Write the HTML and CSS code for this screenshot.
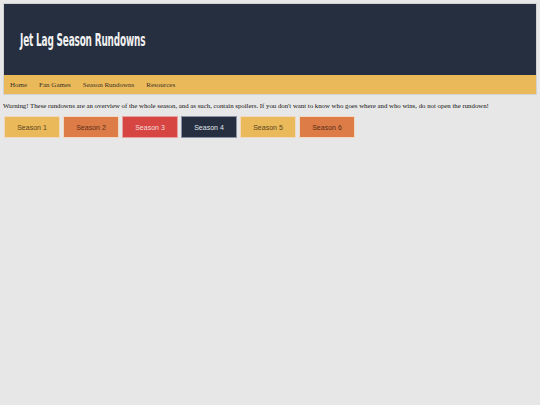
FILE: index.html
```html
<!DOCTYPE html>
<html lang="en">
<head>
  <meta charset="UTF-8">
  <meta name="viewport" content="width=device-width, initial-scale=1.0">
  <title>Jet Lag Season Rundowns</title>
  <link rel="stylesheet" href="styles.css">
</head>
<body>
  <header class="site-header">
    <div class="banner">
      <h1>Jet Lag Season Rundowns</h1>
    </div>
    <nav class="menu">
      <a href="#">Home</a>
      <a href="#">Fan Games</a>
      <a href="#">Season Rundowns</a>
      <a href="#">Resources</a>
    </nav>
  </header>

  <main>
    <p class="warning">Warning! These rundowns are an overview of the whole season, and as such, contain spoilers. If you don't want to know who goes where and who wins, do not open the rundown!</p>
    <div class="seasons">
      <button class="season yellow">Season 1</button>
      <button class="season orange">Season 2</button>
      <button class="season red">Season 3</button>
      <button class="season navy">Season 4</button>
      <button class="season yellow">Season 5</button>
      <button class="season orange">Season 6</button>
    </div>
  </main>
</body>
</html>
```

FILE: styles.css
```css
body {
  margin: 3px;
  background: #e7e7e7;
  font-family: "Liberation Serif", "Times New Roman", serif;
}

.site-header {
  border: 1px solid #d2d2d2;
}

.banner {
  background: #252f40;
  height: 71px;
  display: flex;
  align-items: center;
  padding-left: 16px;

  /* no narrow display face offline, so squeeze the condensed one */
  h1 {
    margin: 0;
    color: #f1f1f1;
    font-family: "DejaVu Sans Condensed", "DejaVu Sans", sans-serif;
    font-stretch: condensed;
    font-weight: bold;
    font-size: 18px;
    letter-spacing: -0.3px;
    transform: scaleX(0.55);
    transform-origin: left center;
    white-space: nowrap;
  }
}

.menu {
  background: #e9b95a;
  height: 19px;
  display: flex;
  align-items: center;
  padding-left: 6px;
  gap: 12px;

  a {
    color: #3a3226;
    text-decoration: none;
    font-size: 7px;
  }
}

.warning {
  margin: 7px 0 0;
  font-size: 6.8px;
  color: #111;
}

.seasons {
  display: flex;
  gap: 3px;
  margin-top: 7px;
  padding-left: 1px;
}

.season {
  width: 56px;
  height: 22px;
  border: 1px solid #f0d9c0;
  font-family: "Liberation Sans", Arial, sans-serif;
  font-size: 7px;
  cursor: pointer;
}

.yellow { background: #e9b95a; color: #5a4320; }
.orange { background: #dd7c47; color: #5a2e18; }
.red { background: #d64541; color: #f6dcdc; border-color: #e8a0a0; }
.navy { background: #252f40; color: #e0e4ea; border-color: #8a93a3; }
```
